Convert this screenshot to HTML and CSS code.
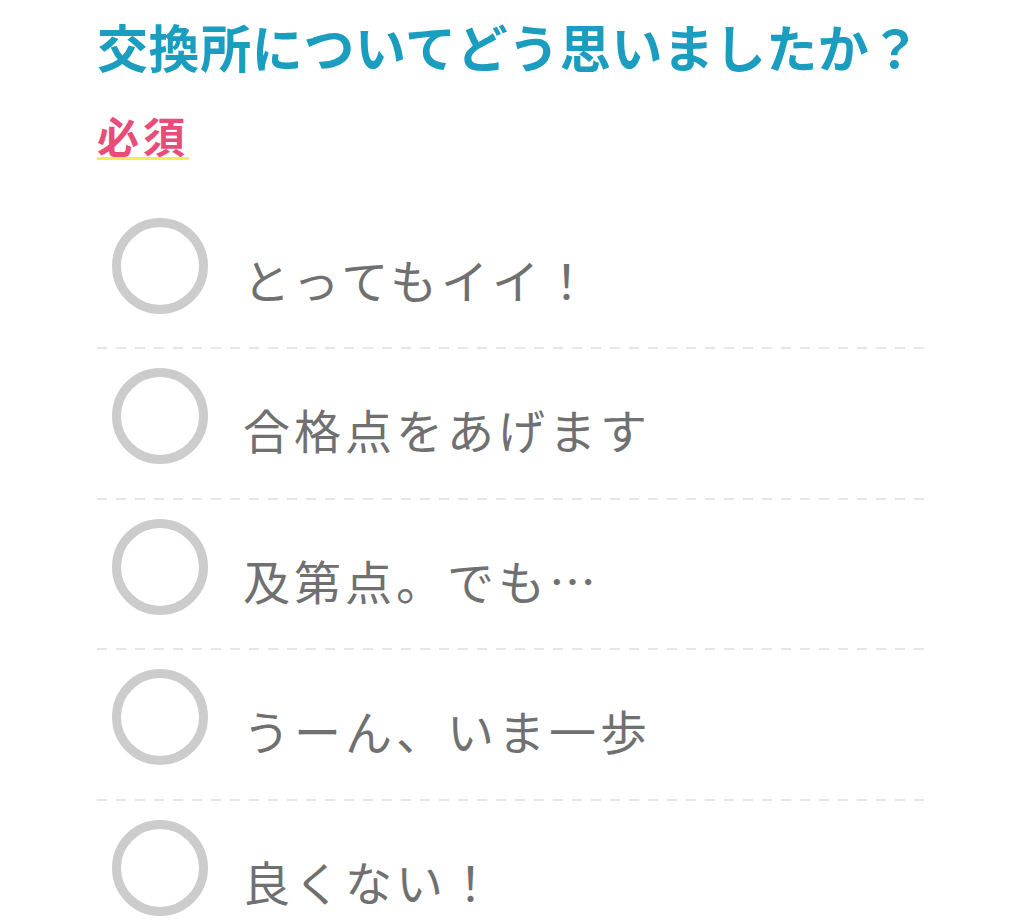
FILE: index.html
```html
<!DOCTYPE html>
<html lang="ja">
<head>
<meta charset="utf-8">
<link rel="stylesheet" href="styles.css">
</head>
<body>
<div class="question">
  <h2 class="title">交換所についてどう思いましたか？</h2>
  <div class="required-wrap"><span class="required">必須</span></div>
  <ul class="options">
    <li class="option"><span class="radio"></span><span class="label">とってもイイ！</span></li>
    <li class="sep"></li>
    <li class="option"><span class="radio"></span><span class="label">合格点をあげます</span></li>
    <li class="sep"></li>
    <li class="option"><span class="radio"></span><span class="label">及第点。でも…</span></li>
    <li class="sep"></li>
    <li class="option"><span class="radio"></span><span class="label">うーん、いま一歩</span></li>
    <li class="sep"></li>
    <li class="option"><span class="radio"></span><span class="label">良くない！</span></li>
  </ul>
</div>
</body>
</html>
```

FILE: styles.css
```css
html, body {
  margin: 0;
  padding: 0;
  background: #ffffff;
}
body {
  font-family: "Noto Sans CJK JP", "Noto Sans", sans-serif;
  overflow: hidden;
}
.question {
  margin-left: 97px;
  width: 831px;
}
.title {
  margin: 16px 0 0 0;
  font-size: 51px;
  line-height: 60px;
  font-weight: 700;
  color: #1b9dbf;
  letter-spacing: 0.6px;
  white-space: nowrap;
}
.required-wrap {
  margin-top: 36px;
}
.required {
  display: inline-block;
  font-size: 42px;
  line-height: 45px;
  font-weight: 700;
  color: #e84c79;
  letter-spacing: 4px;
  border-bottom: 3px solid #f2ec5a;
}
.options {
  list-style: none;
  margin: 39px 0 0 0;
  padding: 0;
}
.option {
  display: flex;
  align-items: center;
  height: 96px;
  padding: 19px 0 33.4px 15px;
}
.radio {
  flex: none;
  width: 78px;
  height: 78px;
  border: 9px solid #cccccc;
  border-radius: 50%;
}
.label {
  margin-left: 35px;
  padding-top: 26px;
  font-size: 47px;
  line-height: 60px;
  color: #707070;
  letter-spacing: 4px;
  white-space: nowrap;
}
.sep {
  height: 2px;
  background: repeating-linear-gradient(to right, #e6e6e6 0 10px, transparent 10px 19px);
}
```
